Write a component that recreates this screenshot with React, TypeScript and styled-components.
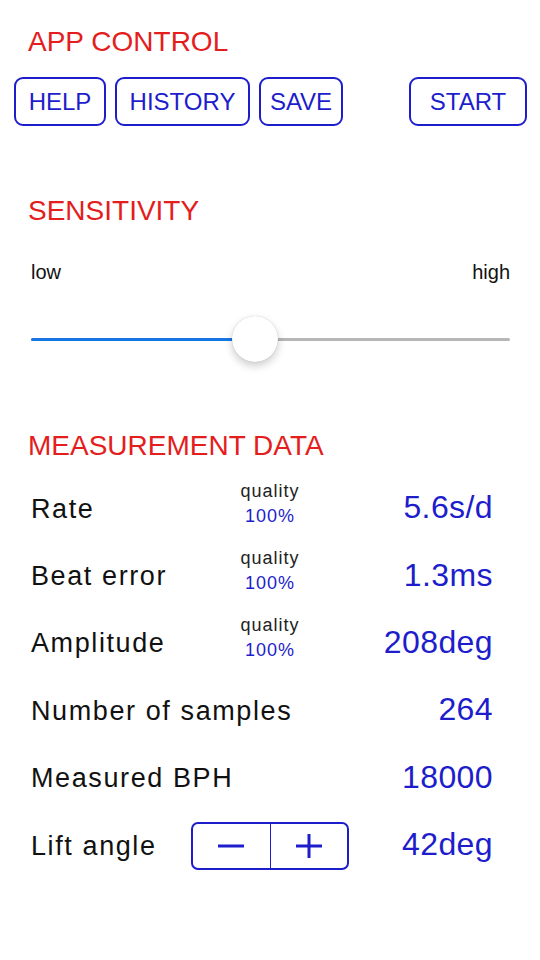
import React from 'react';
import styled, { createGlobalStyle } from 'styled-components';

const BLUE = '#1d1dcc';
const RED = '#e41d1d';

const Global = createGlobalStyle`
  html, body { margin: 0; padding: 0; background: #fff; }
  body { font-family: "Liberation Sans", Arial, Helvetica, sans-serif; color: #111; }
`;

const Page = styled.div`
  width: 540px;
  height: 960px;
  box-sizing: border-box;
  padding-top: 26px;
  display: flex;
  flex-direction: column;
  background: #fff;
  overflow: hidden;
`;

const Heading = styled.h2<{ $mt?: number }>`
  margin: ${(p) => p.$mt ?? 0}px 0 0 28px;
  font-size: 28px;
  line-height: 32px;
  font-weight: 400;
  color: ${RED};
`;

const Toolbar = styled.div`
  margin-top: 19px;
  padding: 0 13px 0 14px;
  display: flex;
  gap: 9px;
`;

const ToolButton = styled.button<{ $w: number; $push?: boolean }>`
  width: ${(p) => p.$w}px;
  height: 49px;
  box-sizing: border-box;
  margin-left: ${(p) => (p.$push ? 'auto' : '0')};
  padding: 0;
  border: 2px solid ${BLUE};
  border-radius: 9px;
  background: #fff;
  color: ${BLUE};
  font-family: inherit;
  font-size: 24px;
  line-height: 1;
`;

const ScaleLabels = styled.div`
  margin-top: 33px;
  padding: 0 30px 0 31px;
  display: flex;
  justify-content: space-between;
  font-size: 20px;
  line-height: 24px;
  color: #111;
`;

const Slider = styled.div`
  position: relative;
  margin: 31px 30px 0 31px;
  height: 48px;
  display: flex;
  align-items: center;
`;

const Track = styled.div`
  position: relative;
  flex: 1;
  height: 3px;
  border-radius: 2px;
  background: #b6b6b6;
  overflow: hidden;
`;

const Fill = styled.div`
  height: 100%;
  background: #1677e4;
`;

const Thumb = styled.div`
  position: absolute;
  top: 1px;
  width: 46px;
  height: 46px;
  margin-left: -23px;
  border-radius: 50%;
  background: #fff;
  box-shadow: 0 0 1px rgba(0, 0, 0, 0.25), 0 4px 8px rgba(0, 0, 0, 0.2);
`;

const Rows = styled.div`
  margin-top: 13px;
  padding: 0 47px 0 31px;
  display: flex;
  flex-direction: column;
`;

const Row = styled.div`
  height: 67.4px;
  display: grid;
  grid-template-columns: 160px 158px 1fr;
  align-items: center;
`;

const Label = styled.div<{ $span?: boolean }>`
  grid-column: ${(p) => (p.$span ? '1 / 3' : '1')};
  grid-row: 1;
  font-size: 27px;
  line-height: 32px;
  letter-spacing: 1.6px;
  white-space: nowrap;
  color: #111;
`;

const Quality = styled.div`
  grid-column: 2;
  grid-row: 1;
  justify-self: center;
  padding-bottom: 10px;
  text-align: center;
  font-size: 18px;
  line-height: 25px;
  letter-spacing: 1px;
  color: #222;
`;

const QualityValue = styled.div`
  color: ${BLUE};
`;

const Value = styled.div`
  grid-column: 3;
  grid-row: 1;
  justify-self: end;
  padding-bottom: 3px;
  font-size: 32px;
  line-height: 36px;
  letter-spacing: 0.4px;
  white-space: nowrap;
  color: ${BLUE};
`;

const Stepper = styled.div`
  grid-column: 2;
  grid-row: 1;
  width: 158px;
  height: 48px;
  box-sizing: border-box;
  border: 2px solid ${BLUE};
  border-radius: 7px;
  display: flex;
`;

const StepButton = styled.button<{ $divider?: boolean }>`
  flex: 1;
  padding: 0;
  border: none;
  border-right: ${(p) => (p.$divider ? `1.5px solid ${BLUE}` : 'none')};
  background: transparent;
  display: flex;
  align-items: center;
  justify-content: center;
`;

const Minus = () => (
  <svg width="28" height="28" viewBox="0 0 28 28">
    <line x1="1" y1="14" x2="27" y2="14" stroke={BLUE} strokeWidth="3" />
  </svg>
);

const Plus = () => (
  <svg width="28" height="28" viewBox="0 0 28 28">
    <line x1="1" y1="14" x2="27" y2="14" stroke={BLUE} strokeWidth="3" />
    <line x1="14" y1="2" x2="14" y2="26" stroke={BLUE} strokeWidth="3" />
  </svg>
);

type DataRow = { label: string; value: string; quality?: string };

const data: DataRow[] = [
  { label: 'Rate', value: '5.6s/d', quality: '100%' },
  { label: 'Beat error', value: '1.3ms', quality: '100%' },
  { label: 'Amplitude', value: '208deg', quality: '100%' },
  { label: 'Number of samples', value: '264' },
  { label: 'Measured BPH', value: '18000' },
];

export default function App() {
  const sensitivity = 0.4676;
  return (
    <Page>
      <Global />
      <Heading>APP CONTROL</Heading>
      <Toolbar>
        <ToolButton $w={92}>HELP</ToolButton>
        <ToolButton $w={135}>HISTORY</ToolButton>
        <ToolButton $w={84}>SAVE</ToolButton>
        <ToolButton $w={118} $push>
          START
        </ToolButton>
      </Toolbar>

      <Heading $mt={69}>SENSITIVITY</Heading>
      <ScaleLabels>
        <span>low</span>
        <span>high</span>
      </ScaleLabels>
      <Slider>
        <Track>
          <Fill style={{ width: `${sensitivity * 100}%` }} />
        </Track>
        <Thumb style={{ left: `${sensitivity * 100}%` }} />
      </Slider>

      <Heading $mt={67}>MEASUREMENT DATA</Heading>
      <Rows>
        {data.map((r) => (
          <Row key={r.label}>
            <Label $span={!r.quality}>{r.label}</Label>
            {r.quality && (
              <Quality>
                <div>quality</div>
                <QualityValue>{r.quality}</QualityValue>
              </Quality>
            )}
            <Value>{r.value}</Value>
          </Row>
        ))}
        <Row>
          <Label>Lift angle</Label>
          <Stepper>
            <StepButton $divider aria-label="decrease">
              <Minus />
            </StepButton>
            <StepButton aria-label="increase">
              <Plus />
            </StepButton>
          </Stepper>
          <Value>42deg</Value>
        </Row>
      </Rows>
    </Page>
  );
}
